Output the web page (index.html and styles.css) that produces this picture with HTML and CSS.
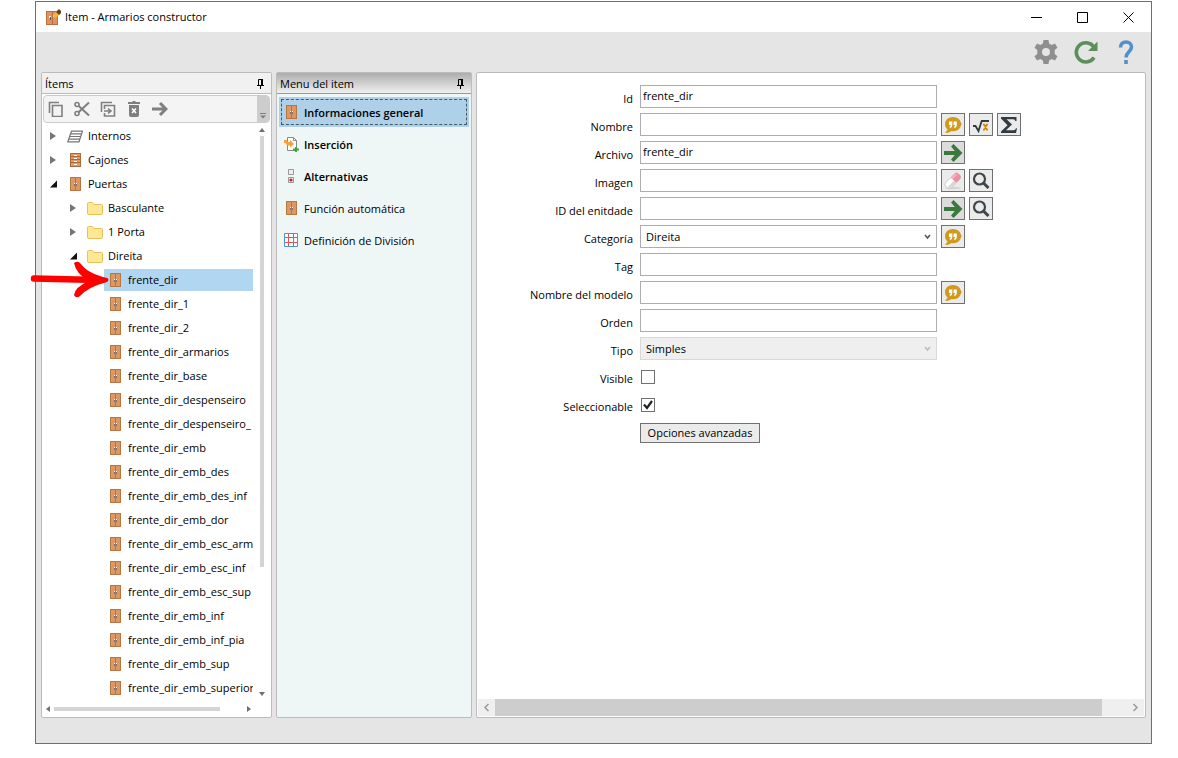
FILE: index.html
```html
<!DOCTYPE html>
<html lang="es">
<head>
    <meta charset="UTF-8">
    <meta name="viewport" content="width=device-width, initial-scale=1.0">
    <title>Item - Armarios constructor</title>
    <link rel="stylesheet" href="styles.css">
</head>
<body>
    <!-- Shared icons -->
    <svg class="sprite" aria-hidden="true">
        <symbol id="i-door" viewBox="0 0 11 14">
            <path fill="#b5793f" d="M0 0h11v14H0z"/>
            <path fill="#de9664" d="M1 1h9v12H1z"/>
            <path fill="#b87444" d="M5 1h1v12H5z"/>
            <path fill="#77757c" d="M4 7h1v2H4zM6 7h1v2H6z"/>
            <path fill="#fff" d="M4 6h1v1H4zM6 6h1v1H6z"/>
        </symbol>
        <symbol id="i-drawers" viewBox="0 0 11 14">
            <path fill="#a9693a" d="M0 0h11v14H0z"/>
            <path fill="#e39a66" d="M1 1h9v2H1zM1 4h9v2H1zM1 7h9v2H1zM1 10h9v3H1z"/>
            <path fill="#fff" d="M4 2h3v1H4zM4 5h3v1H4zM4 8h3v1H4zM4 11h3v1H4z"/>
        </symbol>
        <symbol id="i-shelves" viewBox="0 0 16 12">
            <path fill="none" stroke="#777" stroke-width="1.200" d="M4.500 .7h11L12 11.300H.8zM3.500 3.300h11M2.800 6h11M1.800 8.600h11"/>
        </symbol>
        <symbol id="i-folder" viewBox="0 0 16 13">
            <path fill="#ffe793" stroke="#e5c35c" d="M.5 1.500q0-1 1-1h4l1.500 2h7.500q1 0 1 1v8q0 1-1 1h-13q-1 0-1-1z"/>
        </symbol>
        <symbol id="i-right" viewBox="0 0 7 8"><path fill="#777" d="M0 0l6 4-6 4z"/></symbol>
        <symbol id="i-open" viewBox="0 0 7 7"><path fill="#111" d="M7 0v7H0z"/></symbol>
        <symbol id="i-pin" viewBox="0 0 7 10">
            <path fill="none" stroke="#000" d="M1.500 6V.5h4V6M0 6.500h7M3.500 7v3"/><path fill="#000" d="M4 0h2v6H4z"/>
        </symbol>
        <symbol id="i-quote" viewBox="0 0 18 18">
            <path fill="#d09a1f" d="M9 1C4.200 1 1 4 1 8c0 2.200.8 4 2.500 5.400L1.300 17C4 17 5.500 16.200 7 15.200c6 .8 10-2.200 10-7.200 0-4-3.200-7-8-7z"/>
            <path fill="#fff" d="M5 5.500h3.300v3.700q-.2 2.500-2.600 2.800V10.500q1-.3 1-1.500H5zM9.500 5.500h3.300v3.700q-.2 2.500-2.600 2.800V10.500q1-.3 1-1.500H9.500z"/>
            <path fill="#d09a1f" d="M16 6l2 2-2 2z"/>
        </symbol>
        <symbol id="i-root" viewBox="0 0 18 18">
            <path fill="none" stroke="#333b40" stroke-width="1.800" d="M1 10h2.500l3 5 3.200-10H17"/>
            <path fill="none" stroke="#c98a12" stroke-width="1.700" d="M11 8.700h1.200l2.600 5H16M16 8.700h-1.200l-2.600 5H11"/>
        </symbol>
        <symbol id="i-sum" viewBox="0 0 18 18">
            <path fill="#333b40" d="M1 1h15.500v4h-1.200q-.2-1.700-2-1.700H6.500L12 8.500l-6 5.800h7.500q2 0 2.500-2h1L16 17H1v-1.500l6.500-6.300L1 2.500z"/>
        </symbol>
        <symbol id="i-go" viewBox="0 0 20 20">
            <path fill="none" stroke="#3a783c" stroke-width="4" d="M1 10h15"/>
            <path fill="#3a783c" d="M8 3.500L10.500 1 19.500 10l-9 9L8 16.500 13.500 10z"/>
        </symbol>
        <symbol id="i-eraser" viewBox="0 0 18 18">
            <ellipse cx="9" cy="16" rx="8" ry="1.200" fill="#d3d3d3"/>
            <g transform="rotate(-45 9 9)">
                <rect x="0" y="5" width="18" height="7.500" rx="3" fill="#fff" stroke="#bbb" stroke-width=".7"/>
                <path fill="#d5d5d5" d="M1 9.500h9V12H3q-2 0-2-2.500z"/>
                <path fill="#ea8fa4" d="M10 5h5q3 0 3 3v1.500q0 3-3 3h-5z"/>
                <path fill="#f7b6c3" d="M10 5.500h5l2 2h-7z"/>
            </g>
        </symbol>
        <symbol id="i-search" viewBox="0 0 18 18">
            <circle cx="7.500" cy="7" r="5.500" fill="none" stroke="#3d464b" stroke-width="2.200"/>
            <path stroke="#3d464b" stroke-width="3" d="M11.500 11l5 5"/>
        </symbol>
    </svg>

    <div class="window">
        <header class="titlebar">
            <svg class="app-icon" viewBox="0 0 15 16" aria-hidden="true">
                <path fill="#b96e3e" d="M0 2h12v14H0z"/><path fill="#dd9462" d="M1 3h5v12H1zM7 3h4v12H7z"/>
                <path fill="#eee" d="M3 7h2v2H3zM7 6h2v2H7z"/><path fill="#555" d="M4 8h1v3H4z"/>
                <path fill="#f2b43c" d="M7 9l1-4 4-4 3 3-4 4z"/><path fill="#6b3f1c" d="M10 3l3-3 2 2v2l-2 2z"/>
            </svg>
            <h1 class="title">Item - Armarios constructor</h1>
            <div class="window-buttons">
                <button type="button" aria-label="Minimizar"><svg viewBox="0 0 11 11"><path d="M0 5.500h11"/></svg></button>
                <button type="button" aria-label="Maximizar"><svg viewBox="0 0 11 11"><path d="M.5.5h10v10H.5z"/></svg></button>
                <button type="button" aria-label="Cerrar"><svg viewBox="0 0 11 11"><path d="M.5.5l10 10M10.500.5l-10 10"/></svg></button>
            </div>
        </header>

        <div class="actions">
            <button type="button" aria-label="Configurar">
                <svg viewBox="0 0 24 24"><path fill="#8f8f8f" fill-rule="evenodd" d="M9.500 0h5l.6 3.500 2.500 1.400 3.400-1.300 2.500 4.200-2.800 2.300v3.800l2.800 2.300-2.500 4.200-3.400-1.300-2.500 1.400-.6 3.500h-5l-.6-3.500-2.500-1.400L3 20.400.5 16.200l2.800-2.300v-3.800L.5 7.800 3 3.600l3.400 1.300 2.500-1.400zM12 8a4 4 0 100 8 4 4 0 000-8z"/></svg>
            </button>
            <button type="button" aria-label="Actualizar">
                <svg viewBox="0 0 24 24"><path fill="none" stroke="#5d8f5c" stroke-width="3.600" d="M20 17.500A9.600 9.600 0 1119.500 6.500"/><path fill="#5d8f5c" d="M23.500 1.500V11H14z"/></svg>
            </button>
            <button type="button" aria-label="Ayuda">
                <svg viewBox="0 0 24 24"><path fill="none" stroke="#5191c8" stroke-width="3.600" d="M6.500 7.500C6.500 3.800 9 2 12 2s5.500 1.700 5.500 5c0 4.500-5.500 5-5.500 10.500"/><path fill="#5191c8" d="M10.200 20h3.600v4h-3.600z"/></svg>
            </button>
        </div>

        <div class="workspace">
            <!-- Item tree -->
            <section class="panel items">
                <div class="panel-header">
                    <h2>Ítems</h2>
                    <button type="button" class="pin" aria-label="Fijar"><svg><use href="#i-pin"/></svg></button>
                </div>
                <div class="toolstrip">
                    <button type="button" aria-label="Copiar"><svg viewBox="0 0 16 16"><path d="M1.500 12V1.500H11M4.500 4.500h9.500v11H4.500z"/></svg></button>
                    <button type="button" aria-label="Cortar"><svg viewBox="0 0 16 16"><circle cx="3" cy="3.500" r="2"/><circle cx="3" cy="12.500" r="2"/><path stroke-width="2" d="M4.500 4.800L15 14.500M4.500 11.200L15 1.500"/></svg></button>
                    <button type="button" aria-label="Pegar"><svg viewBox="0 0 16 16"><path d="M1.500 11V1.500H12M4.500 8V4.500h10v10.500h-10v-3M4 10h6M8 7.500l3 2.500-3 2.500"/></svg></button>
                    <button type="button" aria-label="Eliminar"><svg viewBox="0 0 16 16"><path class="solid" d="M2 1h4l1-1h2l1 1h4v2H2zM3 4h10v10q0 2-2 2H5q-2 0-2-2z"/><path class="cross" d="M6 7.500l4 4.500M10 7.500L6 12"/></svg></button>
                    <button type="button" aria-label="Mover"><svg viewBox="0 0 16 16"><path stroke-width="3" d="M0 8h14M8 2l6 6-6 6"/></svg></button>
                    <button type="button" class="overflow" aria-label="Más"><svg viewBox="0 0 6 6"><path class="solid" d="M0 0h6v1H0zM0 2.500h6l-3 3z"/></svg></button>
                </div>
                <div class="tree-area">
                    <ul class="tree" id="tree">
                        <li class="node"><button type="button" class="toggle" aria-label="Expandir"><svg><use href="#i-right"/></svg></button><span class="entry"><svg class="shelves"><use href="#i-shelves"/></svg>Internos</span></li>
                        <li class="node"><button type="button" class="toggle" aria-label="Expandir"><svg><use href="#i-right"/></svg></button><span class="entry"><svg class="door"><use href="#i-drawers"/></svg>Cajones</span></li>
                        <li class="node"><button type="button" class="toggle" aria-label="Contraer"><svg><use href="#i-open"/></svg></button><span class="entry"><svg class="door"><use href="#i-door"/></svg>Puertas</span></li>
                        <li class="node child"><button type="button" class="toggle" aria-label="Expandir"><svg><use href="#i-right"/></svg></button><span class="entry"><svg class="folder"><use href="#i-folder"/></svg>Basculante</span></li>
                        <li class="node child"><button type="button" class="toggle" aria-label="Expandir"><svg><use href="#i-right"/></svg></button><span class="entry"><svg class="folder"><use href="#i-folder"/></svg>1 Porta</span></li>
                        <li class="node child"><button type="button" class="toggle" aria-label="Contraer"><svg><use href="#i-open"/></svg></button><span class="entry"><svg class="folder"><use href="#i-folder"/></svg>Direita</span></li>
                        <li class="node leaf selected"><span class="entry"><svg class="door"><use href="#i-door"/></svg>frente_dir</span></li>
                        <li class="node leaf"><span class="entry"><svg class="door"><use href="#i-door"/></svg>frente_dir_1</span></li>
                        <li class="node leaf"><span class="entry"><svg class="door"><use href="#i-door"/></svg>frente_dir_2</span></li>
                        <li class="node leaf"><span class="entry"><svg class="door"><use href="#i-door"/></svg>frente_dir_armarios</span></li>
                        <li class="node leaf"><span class="entry"><svg class="door"><use href="#i-door"/></svg>frente_dir_base</span></li>
                        <li class="node leaf"><span class="entry"><svg class="door"><use href="#i-door"/></svg>frente_dir_despenseiro</span></li>
                        <li class="node leaf"><span class="entry"><svg class="door"><use href="#i-door"/></svg>frente_dir_despenseiro_</span></li>
                        <li class="node leaf"><span class="entry"><svg class="door"><use href="#i-door"/></svg>frente_dir_emb</span></li>
                        <li class="node leaf"><span class="entry"><svg class="door"><use href="#i-door"/></svg>frente_dir_emb_des</span></li>
                        <li class="node leaf"><span class="entry"><svg class="door"><use href="#i-door"/></svg>frente_dir_emb_des_inf</span></li>
                        <li class="node leaf"><span class="entry"><svg class="door"><use href="#i-door"/></svg>frente_dir_emb_dor</span></li>
                        <li class="node leaf"><span class="entry"><svg class="door"><use href="#i-door"/></svg>frente_dir_emb_esc_arm</span></li>
                        <li class="node leaf"><span class="entry"><svg class="door"><use href="#i-door"/></svg>frente_dir_emb_esc_inf</span></li>
                        <li class="node leaf"><span class="entry"><svg class="door"><use href="#i-door"/></svg>frente_dir_emb_esc_sup</span></li>
                        <li class="node leaf"><span class="entry"><svg class="door"><use href="#i-door"/></svg>frente_dir_emb_inf</span></li>
                        <li class="node leaf"><span class="entry"><svg class="door"><use href="#i-door"/></svg>frente_dir_emb_inf_pia</span></li>
                        <li class="node leaf"><span class="entry"><svg class="door"><use href="#i-door"/></svg>frente_dir_emb_sup</span></li>
                        <li class="node leaf"><span class="entry"><svg class="door"><use href="#i-door"/></svg>frente_dir_emb_superior</span></li>
                    </ul>
                    <div class="scroll-y">
                        <svg viewBox="0 0 6 4"><path d="M0 4l3-4 3 4z"/></svg>
                        <div class="track"><div class="thumb"></div></div>
                        <svg viewBox="0 0 6 4"><path d="M0 0h6L3 4z"/></svg>
                    </div>
                </div>
                <div class="scroll-x">
                    <svg viewBox="0 0 4 6"><path d="M4 0v6L0 3z"/></svg>
                    <div class="track"><div class="thumb"></div></div>
                    <svg viewBox="0 0 4 6"><path d="M0 0v6l4-3z"/></svg>
                </div>
            </section>

            <!-- Item menu -->
            <section class="panel menu">
                <div class="panel-header active">
                    <h2>Menu del item</h2>
                    <button type="button" class="pin" aria-label="Fijar"><svg><use href="#i-pin"/></svg></button>
                </div>
                <nav class="menu-list">
                    <button type="button" class="menu-item strong current"><svg class="door"><use href="#i-door"/></svg><span>Informaciones general</span></button>
                    <button type="button" class="menu-item strong"><svg viewBox="0 0 15 15"><path fill="#fff" stroke="#888" d="M3.500.5h6l3 3v10h-9z"/><path fill="none" stroke="#888" d="M9.500.5v3h3"/><path fill="#f3a33b" d="M0 3h2.500L4 5h2V3l4 4-4 3.500V8.500H3L1.500 6H0z"/><path fill="#3aa63f" d="M11 10h2v1.500h2v2h-2V15h-2v-1.500H9v-2h2z"/></svg><span>Inserción</span></button>
                    <button type="button" class="menu-item strong"><svg viewBox="0 0 15 15"><path fill="#eee" stroke="#999" d="M4.500.5h5v5h-5zM4.500 8.500h5v5h-5z"/><circle cx="7" cy="11" r="1.600" fill="#c22"/></svg><span>Alternativas</span></button>
                    <button type="button" class="menu-item"><svg class="door"><use href="#i-door"/></svg><span>Función automática</span></button>
                    <button type="button" class="menu-item"><svg viewBox="0 0 15 15"><path fill="#fff" stroke="#4f94cf" d="M.5.500h13v13H.5z"/><path stroke="#dc5656" d="M1 4.500h12M1 9.500h12M4.500 1v12M9.500 1v12"/></svg><span>Definición de División</span></button>
                </nav>
            </section>

            <!-- Item details -->
            <main class="panel details">
                <form class="form" id="item-form">
                    <div class="row">
                        <label for="id">Id</label>
                        <input class="field" type="text" id="id" value="frente_dir">
                    </div>
                    <div class="row">
                        <label for="nombre">Nombre</label>
                        <input class="field" type="text" id="nombre">
                        <button type="button" class="tool" aria-label="Traducir"><svg><use href="#i-quote"/></svg></button>
                        <button type="button" class="tool" aria-label="Fórmula"><svg><use href="#i-root"/></svg></button>
                        <button type="button" class="tool" aria-label="Suma"><svg><use href="#i-sum"/></svg></button>
                    </div>
                    <div class="row">
                        <label for="archivo">Archivo</label>
                        <input class="field" type="text" id="archivo" value="frente_dir">
                        <button type="button" class="tool go" aria-label="Ir al archivo"><svg><use href="#i-go"/></svg></button>
                    </div>
                    <div class="row">
                        <label for="imagen">Imagen</label>
                        <input class="field" type="text" id="imagen">
                        <button type="button" class="tool" aria-label="Borrar imagen"><svg><use href="#i-eraser"/></svg></button>
                        <button type="button" class="tool" aria-label="Buscar imagen"><svg><use href="#i-search"/></svg></button>
                    </div>
                    <div class="row">
                        <label for="entidad">ID del enitdade</label>
                        <input class="field" type="text" id="entidad">
                        <button type="button" class="tool go" aria-label="Ir a la entidad"><svg><use href="#i-go"/></svg></button>
                        <button type="button" class="tool" aria-label="Buscar entidad"><svg><use href="#i-search"/></svg></button>
                    </div>
                    <div class="row">
                        <label for="categoria">Categoría</label>
                        <select class="field" id="categoria"><option>Direita</option></select>
                        <button type="button" class="tool" aria-label="Traducir"><svg><use href="#i-quote"/></svg></button>
                    </div>
                    <div class="row">
                        <label for="tag">Tag</label>
                        <input class="field" type="text" id="tag">
                    </div>
                    <div class="row">
                        <label for="modelo">Nombre del modelo</label>
                        <input class="field" type="text" id="modelo">
                        <button type="button" class="tool" aria-label="Traducir"><svg><use href="#i-quote"/></svg></button>
                    </div>
                    <div class="row">
                        <label for="orden">Orden</label>
                        <input class="field" type="text" id="orden">
                    </div>
                    <div class="row">
                        <label for="tipo">Tipo</label>
                        <select class="field" id="tipo" disabled><option>Simples</option></select>
                    </div>
                    <div class="row">
                        <label for="visible">Visible</label>
                        <input class="check" type="checkbox" id="visible">
                    </div>
                    <div class="row">
                        <label for="seleccionable">Seleccionable</label>
                        <input class="check" type="checkbox" id="seleccionable" checked>
                    </div>
                    <div class="row">
                        <span class="spacer"></span>
                        <button type="button" class="advanced">Opciones avanzadas</button>
                    </div>
                </form>
                <div class="scroll-main">
                    <svg viewBox="0 0 17 17"><path d="M10.500 5L7 8.500l3.500 3.500"/></svg>
                    <div class="track"><div class="thumb"></div></div>
                    <svg viewBox="0 0 17 17"><path d="M6.500 5L10 8.500 6.500 12"/></svg>
                </div>
            </main>
        </div>

        <!-- Red pointer to the selected item -->
        <svg class="pointer" viewBox="0 0 80 38" aria-hidden="true">
            <path fill="none" stroke="#fe0000" stroke-width="6.500" stroke-linecap="round" stroke-linejoin="round" d="M4 17.500L68 19"/>
            <path fill="#fe0000" d="M44 2q4-3 7 1 6 9 26 14 3 1.500 0 4Q58 26 50 35q-4 3-6-1 1-8 15-14Q46 13 44 2z"/>
        </svg>
    </div>
</body>
</html>
```
FILE: styles.css
```css
* {
    margin: 0;
    padding: 0;
    box-sizing: border-box;
}

body {
    display: flex;
    min-height: 100vh;
    padding: 1px 26px 14px 35px;
    background: #fff;
    color: #000;
    font-family: "Open Sans", "Noto Sans", sans-serif;
    font-size: 11px;
    line-height: 16px;
}

button,
input,
select {
    font: inherit;
    color: inherit;
}

button {
    border: none;
    background: none;
}

svg {
    display: block;
    flex: none;
}

ul {
    list-style: none;
}

.sprite {
    position: absolute;
    width: 0;
    height: 0;
}

.window {
    position: relative;
    flex: 1;
    min-width: 0;
    display: flex;
    flex-direction: column;
    background: #e5e5e5;
    border: 1px solid #6e6e6e;
}

/* Title bar */
.titlebar {
    display: flex;
    align-items: center;
    gap: 4px;
    height: 30px;
    padding-left: 10px;
    background: #fff;
}

.app-icon {
    width: 15px;
    height: 16px;
}

.title {
    flex: 1;
    font-size: 11px;
    font-weight: 400;
}

.window-buttons {
    display: flex;
}

.window-buttons button {
    width: 46px;
    height: 30px;
    display: flex;
    align-items: center;
    justify-content: center;
}

.window-buttons svg {
    width: 11px;
    height: 11px;
    fill: none;
    stroke: #000;
}

.actions {
    display: flex;
    justify-content: flex-end;
    gap: 16px;
    height: 40px;
    padding: 8px 13px;
}

.actions svg {
    width: 24px;
    height: 24px;
}

/* Panels */
.workspace {
    flex: 1;
    display: flex;
    gap: 4px;
    padding: 0 5px 25px;
}

.panel {
    display: flex;
    flex-direction: column;
    background: #fff;
    border: 1px solid #bcbcbc;
    border-radius: 2px;
}

.panel-header {
    display: flex;
    align-items: center;
    justify-content: space-between;
    height: 21px;
    padding: 2px 7px 0 3px;
    background: #f1f1f1;
    border-bottom: 1px solid #bcbcbc;
}

.panel-header.active {
    background: linear-gradient(#adadad, #f0f0f0);
    border-bottom-color: #999;
}

.panel-header h2 {
    font-size: 11px;
    font-weight: 400;
}

.pin svg {
    width: 7px;
    height: 10px;
}

.door {
    width: 11px;
    height: 14px;
}

.items {
    flex: 0 0 231px;
    min-width: 0;
}

.toolstrip {
    display: flex;
    align-items: center;
    gap: 10px;
    height: 28px;
    margin: 1px 1px 2px;
    padding-left: 4px;
    background: #f4f4f4;
    border: 1px solid #cbcbcb;
    border-radius: 4px;
    overflow: hidden;
}

.toolstrip svg {
    width: 16px;
    height: 16px;
    fill: none;
    stroke: #7f7f7f;
    stroke-width: 1.6;
}

.toolstrip .solid {
    fill: #7f7f7f;
    stroke: none;
}

.toolstrip .cross {
    stroke: #fff;
}

.toolstrip .overflow {
    display: flex;
    align-items: flex-end;
    justify-content: center;
    width: 12px;
    height: 28px;
    margin-left: auto;
    padding-bottom: 4px;
    background: #cdcdcd;
}

.toolstrip .overflow svg {
    width: 6px;
    height: 6px;
}

/* Tree */
.tree-area {
    flex: 1;
    display: flex;
}

.tree {
    flex: 1;
    min-width: 0;
    overflow: hidden;
}

.node {
    display: flex;
    height: 24px;
    padding-bottom: 2px;
    white-space: nowrap;
}

.node.child {
    padding-left: 20px;
}

.node.leaf {
    padding-left: 62px;
}

.toggle {
    flex: 0 0 22px;
    display: flex;
    align-items: center;
    justify-content: center;
}

.toggle svg {
    width: 7px;
    height: 8px;
}

.entry {
    flex: 1;
    display: flex;
    align-items: center;
    gap: 7px;
    padding-left: 6px;
}

.entry .shelves,
.entry .folder {
    width: 16px;
    height: 13px;
    margin: 0 -2px 0 -3px;
}

.selected .entry {
    background: #b1d6f1;
}

.scroll-y {
    display: flex;
    flex-direction: column;
    align-items: center;
    width: 18px;
    padding: 3px 0 5px;
}

.scroll-y svg,
.scroll-x svg {
    fill: #6f6f6f;
}

.scroll-y svg {
    width: 6px;
    height: 4px;
}

.scroll-y .track {
    flex: 1;
    width: 4px;
    padding: 4px 0;
}

.scroll-y .thumb {
    height: 78%;
    background: #d6d3d5;
}

.scroll-x {
    display: flex;
    align-items: center;
    height: 16px;
    padding: 0 20px 0 4px;
}

.scroll-x svg {
    width: 4px;
    height: 6px;
}

.scroll-x .track {
    flex: 1;
    padding: 0 4px;
}

.scroll-x .thumb {
    width: 88%;
    height: 4px;
    background: #d6d3d5;
}

/* Menu */
.menu {
    flex: 0 0 196px;
    background: #eff6f6;
}

.menu-list {
    display: flex;
    flex-direction: column;
    gap: 2px;
    padding: 3px 2px;
}

.menu-item {
    display: flex;
    align-items: center;
    gap: 5px;
    height: 30px;
    padding-left: 5px;
    text-align: left;
}

.menu-item svg {
    width: 15px;
    height: 15px;
}

.menu-item span {
    padding-top: 2px;
}

.menu-item .door {
    height: 14px;
}

.menu-item.strong {
    font-weight: 600;
}

.menu-item.current {
    background: #aed0e9;
    outline: 1px dashed #44586a;
    outline-offset: -3px;
}

/* Details form */
.details {
    flex: 1;
    min-width: 0;
    justify-content: space-between;
    padding: 0 1px 1px;
}

.form {
    display: flex;
    flex-direction: column;
    gap: 5px;
    padding-top: 12px;
}

.row {
    display: flex;
    align-items: center;
    gap: 4px;
    height: 23px;
}

.row label,
.spacer {
    flex: 0 0 158px;
    padding: 4px 3px 0 0;
    text-align: right;
}

.field {
    flex: 0 1 297px;
    min-width: 0;
    height: 23px;
    padding: 0 2px 2px;
    background: #fff;
    border: 1px solid #abadb3;
    border-radius: 0;
}

select.field {
    appearance: none;
    padding: 0 5px;
    background: #fff url('data:image/svg+xml,<svg xmlns="http://www.w3.org/2000/svg" width="7" height="6"><path d="M1 1l2.500 3L6 1" fill="none" stroke="%23555" stroke-width="1.500"/></svg>') no-repeat right 5px center;
}

select.field:disabled {
    background-color: #efefef;
    background-image: url('data:image/svg+xml,<svg xmlns="http://www.w3.org/2000/svg" width="7" height="6"><path d="M1 1l2.500 3L6 1" fill="none" stroke="%23bbb" stroke-width="1.500"/></svg>');
    border-color: #d9d9d9;
    color: #000;
    opacity: 1;
}

.tool {
    display: flex;
    align-items: center;
    justify-content: center;
    width: 24px;
    height: 23px;
    background: #ebebeb;
    border: 1px solid #707070;
}

.tool svg {
    width: 18px;
    height: 18px;
}

.tool.go {
    background: #dcdcdc;
}

.tool.go svg {
    width: 20px;
    height: 20px;
}

.check {
    appearance: none;
    width: 14px;
    height: 14px;
    margin-left: 1px;
    background: #fff;
    border: 1px solid #707070;
}

.check:checked {
    background: #fff url('data:image/svg+xml,<svg xmlns="http://www.w3.org/2000/svg" width="12" height="12"><path d="M2 5.500l3 3.500 5-7" fill="none" stroke="%23212121" stroke-width="2.200"/></svg>') no-repeat center;
}

.advanced {
    min-width: 120px;
    height: 20px;
    padding: 1px 5px 0;
    background: #ebebeb;
    border: 1px solid #707070;
}

.scroll-main {
    display: flex;
    height: 17px;
    background: #efefef;
}

.scroll-main svg {
    width: 17px;
    height: 17px;
    fill: none;
    stroke: #999;
    stroke-width: 1.5;
}

.scroll-main .track {
    flex: 1;
}

.scroll-main .thumb {
    width: 96%;
    height: 17px;
    background: #cdcdcd;
}

.pointer {
    position: absolute;
    left: -6px;
    top: 259px;
    width: 80px;
    height: 38px;
}
```
